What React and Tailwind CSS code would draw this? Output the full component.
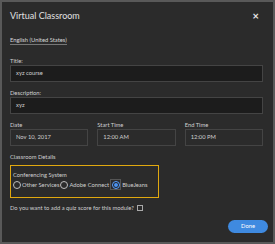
import React from "react";

const font = { fontFamily: 'Lato, "Open Sans", "Liberation Sans", sans-serif' };

function Radio({ checked, focused }) {
  return (
    <span className={"shrink-0 flex items-center justify-center " + (focused ? "w-[11px] h-[11px] border border-[#555]" : "")}>
      <span className={"w-[8px] h-[8px] rounded-full border flex items-center justify-center " + (checked ? "border-[#5aa0ff] bg-[#1e1e1e]" : "border-[#bdbdbd]")}>
        {checked && <span className="w-[4px] h-[4px] rounded-full bg-[#4b93f0]" />}
      </span>
    </span>
  );
}

export default function App() {
  return (
    <div className="w-[275px] h-[244px] border-2 border-[#595959] bg-[#2b2b2b] text-[#cfcfcf] overflow-hidden" style={font}>
      <div className="pl-[8px] pr-[10px]">
        <div className="h-[24px] flex items-center justify-between pt-[3px]">
          <span className="text-[9px] text-[#e0e0e0]">Virtual Classroom</span>
          <span className="text-[11px] font-bold text-[#e8e8e8] mr-[4px] leading-none">×</span>
        </div>
        <div className="h-[24px] flex items-center pt-[4px]">
          <span className="text-[5.8px] text-[#d8d8d8] border-b border-[#777] leading-[8px]">English (United States)</span>
        </div>
        <div className="mt-[7px] text-[5.8px] leading-[8px]">Title:</div>
        <div className="h-[17px] border border-[#444] bg-[#1c1c1c] flex items-center px-[5px] text-[5.8px]">xyz course</div>
        <div className="mt-[7px] text-[5.8px] leading-[8px]">Description:</div>
        <div className="h-[17px] border border-[#444] bg-[#1c1c1c] flex items-center px-[5px] text-[5.8px]">xyz</div>
        <div className="mt-[7px] grid grid-cols-3 gap-[9px]">
          {[["Date", "Nov 10, 2017"], ["Start Time", "12:00 AM"], ["End Time", "12:00 PM"]].map(([l, v]) => (
            <div key={l}>
              <div className="text-[5.8px] leading-[8px]">{l}</div>
              <div className="h-[17px] border border-[#444] bg-[#2b2b2b] flex items-center px-[5px] text-[5.8px]">{v}</div>
            </div>
          ))}
        </div>
        <div className="mt-[7px] text-[5.8px] leading-[8px]">Classroom Details</div>
        <div className="mt-[4px] w-[149px] h-[33px] border border-[#e0a80f] px-[2px] pt-[5px]">
          <div className="text-[5.8px] leading-[8px]">Conferencing System</div>
          <div className="flex items-center text-[5.8px] leading-[10px] whitespace-nowrap">
            <Radio />
            <span className="ml-[1px] mr-[1px]">Other Services</span>
            <Radio />
            <span className="ml-[1px] mr-[1px]">Adobe Connect</span>
            <Radio checked focused />
            <span className="ml-[1px]">BlueJeans</span>
          </div>
        </div>
        <div className="mt-[6px] flex items-center text-[5.8px] leading-[8px]">
          <span>Do you want to add a quiz score for this module?</span>
          <span className="ml-[3px] w-[6px] h-[6px] border border-[#aaa]" />
        </div>
        <div className="mt-[8px] flex justify-end -mr-[5px]">
          <div className="w-[40px] h-[13px] rounded-full bg-[#3f8ae0] text-white text-[5.8px] flex items-center justify-center">Done</div>
        </div>
      </div>
    </div>
  );
}
